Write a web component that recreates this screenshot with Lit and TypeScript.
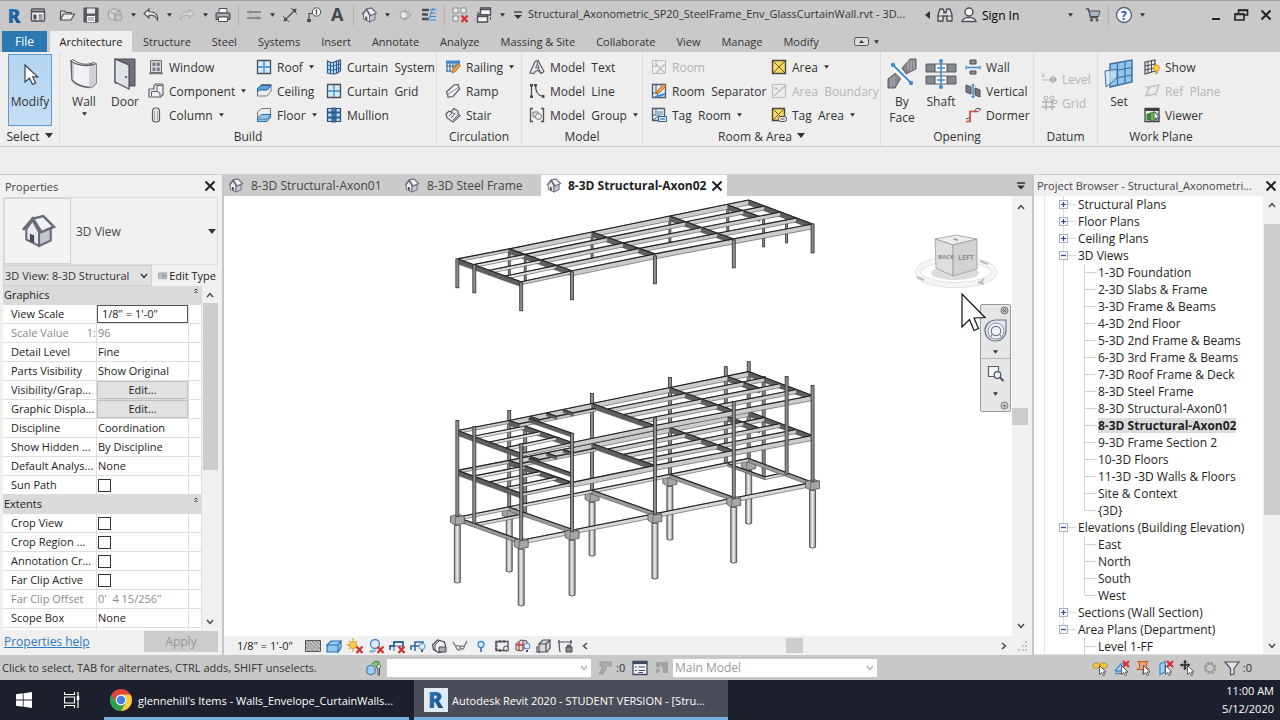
import { LitElement, html, svg, css, nothing } from "lit";
import { customElement } from "lit/decorators.js";
import { classMap } from "lit/directives/class-map.js";

/* ---------- icon artwork (16 × 16 unless noted) ---------- */

const D = "#4b4d57";
const B = "#3c8bd0";
const L = "#b9dcf5";

const cursorArrow = svg`<path d="M7.500 5.500v9l2.100-1.900 1.500 3 1.500-.7-1.500-2.900h2.900z" fill="#fff" stroke=${D} stroke-width=".9"/>`;
const redX = svg`<path d="M9.500 8.500l6 6.500M15.500 8.500l-6 6.500" stroke="#d8302f" stroke-width="2.200"/>`;
const pencil = svg`<path d="M7 14l1-3.500 5-6 2.500 2-5 6z" fill="#f2a13c" stroke="#a8591c" stroke-width=".8"/>`;

const art: Record<string, unknown> = {
  home: svg`<rect x="1.500" y="2" width="13" height="12" rx="1" fill="#f4f4f4" stroke=${D} stroke-width="1.400"/><path d="M2 4.500h12" stroke=${D} stroke-width="2"/><path d="M3.500 7.500h3v5h-3z" fill=${D}/><path d="M8.500 8h4M8.500 10h4M8.500 12h4" stroke=${D}/>`,
  open: svg`<path d="M1.500 13V4h4l1.500 1.500h5V7" fill="#d9d9d9" stroke=${D} stroke-width="1.200"/><path d="M1.500 13l3-6h11l-3.500 6z" fill="#eee" stroke=${D} stroke-width="1.200"/>`,
  save: svg`<path d="M1 1h14v14H1z" fill="#5a5c66" stroke=${D}/><path d="M4 1.500h8v5H4z" fill="#e6e6e6"/><path d="M4 9h8v6H4z" fill="#f5f5f5"/><path d="M5 11h6M5 13h6" stroke="#888"/>`,
  sync: svg`<path d="M1.500 4.500l5.500-3 6 2v7l-5.500 3-6-2.500z" fill="#d2d2d2" stroke="#9a9ca2"/><path d="M1.500 4.500l6 2.300 5.500-3.300M7.500 7v6.500" fill="none" stroke="#9a9ca2"/><circle cx="11.500" cy="10.500" r="3.500" fill="#c2c2c2" stroke="#9a9ca2"/>`,
  undo: svg`<path d="M6 2L1 6.500 6 11V8.200c4-.3 7 .8 8.500 4.800C15.500 8 12 4.600 6 4.800z" fill="#eee" stroke=${D} stroke-width="1.100"/>`,
  redo: svg`<path d="M10 2l5 4.500-5 4.500V8.200c-4-.3-7 .8-8.500 4.800C.5 8 4 4.600 10 4.800z" fill="#d6d6d6" stroke="#a5a5a8"/>`,
  print: svg`<path d="M4 1.500h8V6H4z" fill="#fff" stroke=${D}/><path d="M1 6h14v6.500H1z" fill="#888a92" stroke=${D}/><path d="M3.500 10h9v4.500h-9z" fill="#fff" stroke=${D}/><path d="M2.500 8h11" stroke="#ddd"/>`,
  measure: svg`<path d="M1 5h14M1 11h14" stroke="#888a92" stroke-width="2"/><path d="M1 8h14" stroke="#c9b9a0"/><path d="M4 3v4M12 9v4" stroke="#888a92"/>`,
  dim: svg`<path d="M3 13L13 3" stroke=${D} stroke-width="1.300"/><path d="M1.500 14.500l1-4.500L6 13.500zM14.500 1.500l-1 4.500L10 2.500z" fill=${D}/><path d="M1 9l6 6M9 1l6 6" stroke=${D} stroke-width=".9"/>`,
  tag: svg`<circle cx="10.500" cy="5" r="4.200" fill="#f4f4f4" stroke=${D}/><path d="M10.500 2.800v4.600M9.500 3.800l1-.9" stroke=${D} stroke-width="1.200" fill="none"/><path d="M6.500 6.500H3v6" fill="none" stroke=${D} stroke-width="1.200"/><path d="M1 12h4v3H1z" fill=${D}/>`,
  textA: svg`<text x="1" y="14" font-size="18" font-weight="700" fill="#44464e" font-family="Open Sans, sans-serif">A</text>`,
  house: svg`<path d="M2.500 7v5L8.500 15V8.500L5.500 3z" fill="#e9e9ef" stroke="#6a6c78"/><path d="M8.500 8.500V15l5.500-2.500V6.500z" fill="#c3c6d2" stroke="#6a6c78"/><path d="M5.500 2.200l5-1.200L15.500 6l-6 2.500z" fill="#f1f2f7" stroke="#6a6c78" stroke-width="1.200"/><path d="M1 7.500L5.500 2.200l4 6.300" fill="none" stroke="#6a6c78" stroke-width="1.300"/><path d="M4.200 9.300l2 .7v3.700l-2-1z" fill="#4a4c58"/>`,
  section: svg`<circle cx="7" cy="8" r="4" fill="#ddd" stroke="#9b9da3"/><path d="M8 3l6 5-6 5z" fill="#bfbfc2" stroke="#9b9da3"/><circle cx="7" cy="8" r="2.500" fill="#e8e8d8"/>`,
  thin: svg`<path d="M1 3h7M1 7.500h6M1 12h7" stroke=${D} stroke-width="2.500"/><path d="M9 2.500h6M9 6h6M9 9.500h6M9 13h6" stroke=${B}/><path d="M12 1L7 14" stroke=${B} stroke-width="1"/>`,
  closeHidden: svg`<path d="M1 1h5v5H1zM9 1h5v5H9zM1 9h5v5H1z" fill="#ededed" stroke="#8a8a8a"/>${redX}`,
  switchWin: svg`<path d="M4.500 1h10v7h-10z" fill="#f4f4f4" stroke=${D} stroke-width="1.400"/><path d="M1.500 8h10v7h-10z" fill="#f4f4f4" stroke=${D} stroke-width="1.400"/><path d="M1.500 9.500h10M4.500 2.500h10" stroke=${D} stroke-width="1.500"/><path d="M1 5l2 2 1.500-2M14.500 10v3" stroke=${D} fill="none"/>`,
  customise: svg`<path d="M4 5h8" stroke="#333" stroke-width="1.300"/><path d="M4 8h8l-4 4z" fill="#333"/>`,
  binoc: svg`<path d="M1 14V8l2-6h3l1 3h2l1-3h3l2 6v6h-5V9H6v5z" fill="#e3e3e6" stroke=${D} stroke-width="1.400"/><path d="M1 9h5M10 9h5M6 6h4" stroke=${D} stroke-width="1.200"/>`,
  person: svg`<circle cx="8" cy="5" r="4" fill="#f2f2f2" stroke=${D} stroke-width="1.400"/><path d="M1 14.500c.5-3 3-3.500 5-4h4c2 .5 4.500 1 5 4z" fill="#f2f2f2" stroke=${D} stroke-width="1.400"/>`,
  cart: svg`<path d="M1 2h2.500l2 8.500H13" fill="none" stroke=${D} stroke-width="1.400"/><path d="M4 4h11l-1.500 5.500h-8z" fill="#a7b4c6" stroke=${D}/><circle cx="6.500" cy="13" r="1.500" fill=${D}/><circle cx="12" cy="13" r="1.500" fill=${D}/>`,
  help: svg`<circle cx="8" cy="8" r="7.500" fill="#f6f8fc" stroke="#56617c" stroke-width="1.300"/><text x="5" y="12.500" font-size="12" font-weight="700" fill="#2a57a8" font-family="Open Sans, sans-serif">?</text>`,
  minimise: svg`<path d="M4 12h8" stroke="#222" stroke-width="2"/>`,
  restore: svg`<path d="M5.500 6V3h9v5h-3M2 7h9v6H2z" fill="none" stroke="#222" stroke-width="1.600"/><path d="M2 7.500h9M5.500 3.500h9" stroke="#222" stroke-width="1.500"/>`,
  close: svg`<path d="M3.500 3.500l9 9M12.500 3.500l-9 9" stroke="#222" stroke-width="2"/>`,
  window: svg`<path d="M2.500 1.500h11v12h-11z" fill="#d9d9dd" stroke="#6d6f78"/><path d="M4.500 3.500h3v3.500h-3zM8.800 3.500h3v3.500h-3zM4.500 8.500h3v3.500h-3zM8.800 8.500h3v3.500h-3z" fill="#777a84"/><path d="M1 14.500h14" stroke="#6d6f78" stroke-width="1.400"/>`,
  component: svg`<path d="M1 6h5V2.500L8 1h6.500l.5 1v9.500L12.500 14H1z" fill="#f0f0f2" stroke="#5b5d66" stroke-width="1.200"/><path d="M9 2v6.500H3.500V13M9 2.500h5M9 8.500l3 1.500v4" fill="none" stroke="#5b5d66"/>`,
  column: svg`<rect x="4.500" y="1" width="7" height="14" rx="3" fill="#e9e9ec" stroke="#5b5d66" stroke-width="1.200"/><path d="M6.500 4v9M9.500 4v9" stroke="#aaa"/>`,
  roof: svg`<path d="M1.500 1.500h13v13h-13z" fill="#d5e9f8" stroke=${D} stroke-width="1.300"/><path d="M8 2v12M2 8h12" stroke=${B} stroke-width="1.300"/>`,
  ceiling: svg`<path d="M1.500 6l4-4.500h9.500v7L11 13H1.500z" fill="#ededf0" stroke="#777" /><path d="M1.500 5.500l3-3H15l-3.500 4.500h-8L1.500 9z" fill="#5aa5e0" stroke="#2e5f92"/>`,
  floor: svg`<path d="M1.500 5l4-3.500h9v9l-4 3h-9z" fill="#ececef" stroke="#777"/><path d="M1.500 11l4-3.500H15L11 12H1.500zM1.500 11.500v3H11l4-4.500" fill="#8cc3ee" stroke="#2e6aa5"/>`,
  curtainSystem: svg`<path d="M1.500 2c3 2 7 2 9 0l4-1v11l-4 2.500c-3 1-6 .5-9-.5z" fill=${L} stroke="#2d5a8c" stroke-width="1.200"/><path d="M4.500 3.500v11M7.500 3.500v11M10.500 2v12M12.500 2v11M1.500 6c3 1.500 7 1.500 9 0l4-1M1.500 10c3 1.500 7 1.500 9 0l4-1" fill="none" stroke="#2d5a8c"/>`,
  mullion: svg`<path d="M1.500 1.500h13v13h-13z" fill=${L} stroke="#2d4a6c" stroke-width="1.200"/><path d="M6 1h4v14H6z" fill="#3f7fc0" stroke="#223f60" stroke-width=".8"/><path d="M1.500 5.500h13M1.500 10.500h13" stroke="#2d5a8c" stroke-width="1.800"/>`,
  railing: svg`<path d="M1 3h14" stroke=${B} stroke-width="3"/><path d="M2 4v9M5 4v9M8 4v6M11 4v3M14 4v2M1 7h13M1 12h6" stroke="#3d6b9c" stroke-width="1.200"/>${pencil}`,
  ramp: svg`<path d="M1.500 9L9 2l4-.5L14.500 6 8 13.500l-5 .5z" fill="#f1f1f3" stroke="#5b5d66" stroke-width="1.200"/><path d="M3 14V11L14 4" fill="none" stroke="#8b8d95"/>`,
  stair: svg`<path d="M1 7l3-3 2 1 3-3.500 4 2.500v3l2 1.500L8 15 2 11z" fill="#ebebee" stroke="#5b5d66" stroke-width="1.200"/><path d="M4 9l3-3M6 11l4-4.500M8 13l5-5M6 5l4 2" stroke="#5b5d66"/>`,
  modelText: svg`<path d="M1 14L6 2.500l3-1 6 11-3 2-2.500-3-3 .5L5 14.500z" fill="#f0f0f2" stroke="#5b5d66" stroke-width="1.200"/><path d="M6.500 9l2-4 1.500 4zM9 1.500L8 5M12 14.500L9 8" fill="none" stroke="#5b5d66"/>`,
  modelLine: svg`<path d="M2.500 2v12M6.500 2c0 7 2 10.500 8 11.500" fill="none" stroke=${D} stroke-width="1.300"/><path d="M1 1h3v2.500H1zM1 12.500h3V15H1zM5 1h3v2.500H5zM13 12h2.500v3H13z" fill=${D}/>`,
  modelGroup: svg`<path d="M4 1.500H1.500v13H4M12 1.500h2.500v13H12" fill="none" stroke=${D} stroke-width="1.300"/><path d="M4 5h5v5H4z" fill="#e5e5e8" stroke="#777"/><circle cx="9.500" cy="9.500" r="3" fill="#eee" stroke="#777"/>`,
  room: svg`<path d="M1.500 1.500h13v13h-13z" fill="#f0f0f0" stroke="#b9b9bc"/><path d="M5 1.500v6H1.500M5 5l9 9M14 5l-9 9" stroke="#b9b9bc" fill="none" stroke-width="1.200"/>`,
  roomSep: svg`<path d="M1.500 1.500h13v13h-13z" fill="#e8eef5" stroke="#4b5a70" stroke-width="1.300"/><path d="M5 1.500v8M1.500 10h5v4" stroke="#4b5a70" fill="none"/><path d="M4 14l10-3" stroke=${B} stroke-width="2"/><path d="M5.500 10.500l1-3L12.500 1 15 3 9 9.500z" fill="#f2a13c" stroke="#a8591c" stroke-width=".8"/>`,
  tagRoom: svg`<path d="M1.500 1.500h12v12h-12z" fill="#e8eef5" stroke="#4b5a70" stroke-width="1.300"/><path d="M5 1.500v6M1.500 8h8M2 13l6-4" stroke="#4b5a70" fill="none"/><path d="M5 4h7v4H5z" fill="#9fb6cd"/><path d="M7.500 9.500h8v5h-8z" fill="#d8ecfa" stroke="#2d5a8c"/><path d="M9 12h5" stroke="#2d5a8c"/>`,
  area: svg`<path d="M1.500 1.500h13v13h-13z" fill="#f7d765" stroke="#4d4636" stroke-width="1.400"/><path d="M2 2l12 12M14 2L2 14" stroke="#6b5a22"/>`,
  areaB: svg`<path d="M1.500 1.500h13v13h-13z" fill="#ededed" stroke="#bdbdc0" stroke-width="1.200"/><path d="M3 13L14 3M3 5l4 1" stroke="#bdbdc0" stroke-width="1.500"/>`,
  tagArea: svg`<path d="M1.500 1.500h12v12h-12z" fill="#f7d765" stroke="#4d4636" stroke-width="1.400"/><path d="M2 2l11 11M13 2L2 13" stroke="#6b5a22"/><rect x="7.500" y="9.500" width="8" height="5" rx="2" fill="#ececef" stroke=${D}/><path d="M9.500 12h4" stroke=${D}/>`,
  opWall: svg`<path d="M5 1h6v4H5zM5 12h6v3H5z" fill="#8a8c94" stroke=${D}/><path d="M1 8.500h14" stroke=${B} stroke-width="1.500"/><path d="M1 6.500v4M15 6.500v4" stroke=${B}/>`,
  opVert: svg`<path d="M1 2l5 2v7L1 9zM10 5l5 2v7l-5-2z" fill="#777a82" stroke=${D}/><path d="M8 1v14" stroke=${B} stroke-width="1.500"/><path d="M6.500 3L8 1l1.500 2M6.500 13L8 15l1.500-2" fill="none" stroke=${B}/>`,
  dormer: svg`<path d="M1 14.500h4v-10h8.500" fill="none" stroke="#c9453f" stroke-width="1.700"/><path d="M9.500 4l2-2.500h3.500V4M1 12l3-1" fill="none" stroke=${D}/>`,
  level: svg`<path d="M1 5h3M1 9h8" stroke="#b5b5b8"/><path d="M2 2v4" stroke="#b5b5b8"/><path d="M12 4l4 4.500-4 4.500-4-4.500z" fill="#a9a9ad"/><path d="M12 4v9" stroke="#e8e8e8"/>`,
  grid: svg`<path d="M5 5v10M11 5v10M1 7h13M1 12h13" stroke="#b0b0b4" stroke-width="1.300"/><circle cx="5" cy="3" r="2" fill="#eee" stroke="#b0b0b4"/><circle cx="11" cy="3" r="2" fill="#eee" stroke="#b0b0b4"/><circle cx="14" cy="7" r="1.800" fill="#eee" stroke="#b0b0b4"/>`,
  show: svg`<path d="M1 3l10-2v11L1 15z" fill="#eaeaea" stroke=${D} stroke-width="1.200"/><path d="M4 2.500v12M7.500 2v11M1 7l10-2M1 11l10-2" stroke=${D}/><circle cx="12.500" cy="9" r="3" fill="#fbd34e" stroke="#d99a21"/><path d="M11.300 12h2.500v3h-2.500z" fill="#c59a41"/>`,
  refPlane: svg`<path d="M2 13L5 4l10-2-3 9z" fill="#ebebeb" stroke="#bdbdc0" stroke-width="1.300"/><path d="M1 3l5 3M10 10l4 4" stroke="#bdbdc0"/>`,
  viewer: svg`<path d="M1 1.500h14v13H1z" fill="#e9efe9" stroke="#3e414a" stroke-width="1.300"/><path d="M1 3h14" stroke="#3e414a" stroke-width="2"/><path d="M2.500 7l4-1.500v8l-4-.5z" fill="#3f7f3c"/><path d="M6.500 6l4-1 3 2v5l-4 2-3-.500z" fill="#65bf4e" stroke="#2f6a30" stroke-width=".8"/><path d="M10 4.500v8l2-1.600 1.300 2.700 1.200-.6-1.300-2.600h2.500z" fill="#fff" stroke=${D} stroke-width=".9"/>`,
  editType: svg`<path d="M1 3h6v9H1zM8 3h6v4H8zM8 8.500h6v4H8z" fill="#e3e6ea" stroke="#7a7f88"/><path d="M1 6h6M1 9h6M11 3v9" stroke="#7a7f88"/>`,
  /* view control bar */
  detail: svg`<path d="M.5 2.500h15v11H.5z" fill="#c9c9c9" stroke="#555"/><path d="M1 5l2-2M1 8l5-5M1 11l8-8M2 13L12 3M5 13L15 3M8 13l7-7M11 13l4-4M3 3l10 10M7 3l8 8M1 5l8 8M11 3l4 4M1 9l4 4" stroke="#777" stroke-width=".6"/>`,
  vstyle: svg`<path d="M1 7l4-4h10l-3 4zM1 7h11v7H1zM12 7l3-4v7l-3 4z" fill="#8fc8f2" stroke="#2f6ca3" stroke-width="1.100"/>`,
  sun: svg`<circle cx="6" cy="7" r="3.500" fill="#fbd24e" stroke="#d69a1d"/><path d="M6 .5v2M6 11.500v2M0 7h2M2 3l1 1M2 11l1-1M10 3L9 4" stroke="#e0a020" stroke-width="1.500"/>${redX}`,
  shadow: svg`<circle cx="7" cy="6" r="4.500" fill="#d8ebf8" stroke="#4a86bf" stroke-width="1.300"/><path d="M2 12h7l-3 2.500H1z" fill="#8eb3d2"/>${redX}`,
  cropX: svg`<path d="M1 12V8h4V4h9v6" fill="none" stroke="#39699c" stroke-width="1.800"/><path d="M1 8h14M5 4v9" stroke="#39699c"/>${redX}`,
  cropV: svg`<path d="M1 12V8h4V4h9M5 4v9M1 8h9" fill="none" stroke="#39699c" stroke-width="1.600"/><circle cx="12" cy="8.500" r="3" fill="#e1f0fb" stroke=${B}/><path d="M11 12h2v2h-2z" fill=${D}/>`,
  lock3d: svg`<path d="M1.500 7l5-5 7 2 1 4v5l-7 1.500-5-3z" fill="#f2f2f4" stroke=${D} stroke-width="1.200"/><path d="M4 7v6M4 7l4-4" stroke=${D}/><path d="M8 9h7v5H8z" fill="#a9abb2" stroke=${D}/>`,
  glasses: svg`<path d="M1 4l4 7c2 2 4 1 3-2 0-1-2-2-4-1M8 9c2-2 5-1 4 1-1 2-4 1-4-1M12 9l3-6" fill="none" stroke="#6d6f78" stroke-width="1.200"/>`,
  bulb: svg`<circle cx="8" cy="6.500" r="3" fill="#d8ecfb" stroke=${B} stroke-width="1.300"/><path d="M7 10h2v4H7z" fill="#5d86ad"/>`,
  tmpView: svg`<path d="M2 3.500h12v9H2z" fill="#eee" stroke=${D} stroke-width="1.300"/><path d="M1 5h3M1 8h3M1 11h3M6 2v3M10 2v3M6 11v3" stroke=${D} stroke-width="1.200"/><circle cx="12" cy="10.500" r="2.500" fill="#ddd" stroke=${D}/>`,
  analytic: svg`<path d="M1 6l5-4 6 1v6l-6 4-5-1z" fill="#e2e2e6" stroke=${D}/><path d="M1 7h9M4 4v9M8 3v9" stroke="#c73f3a" stroke-width="1.300"/><circle cx="12" cy="8" r="3" fill="#dceefb" stroke=${B}/><path d="M11 12h2v2h-2z" fill=${D}/>`,
  displace: svg`<path d="M3 6l4-4h7v8l-3 4H3z" fill="#d8d8dc" stroke=${D} stroke-width="1.200"/><path d="M3 6h7v8M10 6l4-4M1 8v6h3" fill="none" stroke=${D} stroke-width="1.200"/>`,
  constraint: svg`<path d="M1 4h14M2 2v4M14 2v4M2 6l1 8" stroke=${D} stroke-width="1.200" fill="none"/><path d="M9 9h6v5H9zM10.500 9V7h3v2" fill="#888a92" stroke=${D}/>`,
  /* status bar */
  worksets: svg`<path d="M1 7l4-2 4 2v6l-4 2-4-2z" fill="#9cd0f2" stroke="#2f6ca3"/><path d="M6 4l3-3 4 1v5l-3 1" fill="#7dc46b" stroke="#3c7f35"/><path d="M12 5c-2 1-1 3 0 3v7h1.500V8c1.500-1 1.500-2 .5-3" fill="#e6e6ea" stroke=${D}/>`,
  requests: svg`<path d="M3 2h11v4H9v3l-3 5H2l3-5V6H3z" fill="#acacb0" stroke="#98989c"/>`,
  options: svg`<path d="M1 1.500h14v13H1z" fill="#f3f5f8" stroke="#3d4a61" stroke-width="1.300"/><path d="M1 3h14" stroke="#3d4a61" stroke-width="2.200"/><path d="M3 7h2M3 10.500h2M6.500 7H13M6.500 10.500H13M6.500 12.500H11" stroke="#3d4a61" stroke-width="1.200"/>`,
  addSet: svg`<path d="M2 2h12v11H9V8L4 13H2z" fill="#a2a2a6"/><path d="M2 8h6l-2-3M8 8l-2 3" stroke="#ddd" fill="none"/>`,
  selLinks: svg`<path d="M1 6c0-4 6-4 7-1 1-3 7-3 7 1 0 3-4 3-6 1H7C5 9 1 9 1 6z" fill="#f2c744" stroke="#b48a1c"/>${cursorArrow}`,
  selUnder: svg`<path d="M1 11l6-7h6M1 11h7M1 13.500h7" fill="#bfe0f6" stroke=${B} stroke-width="1.300"/><path d="M9 1l6 6M15 1L9 7" stroke="#d8302f" stroke-width="2.200"/>${cursorArrow}`,
  selPin: svg`<path d="M2 1.500h10L10.500 4v3l2.500 2.500H1L3.500 7V4z" fill="#f2a06a" stroke="#c2552a"/><path d="M7 9.500V15" stroke="#c2552a"/>${cursorArrow}`,
  selFace: svg`<path d="M2 4l5-2.500V12L2 14.500z" fill="#a6d4f4" stroke=${B} stroke-width="1.300"/><path d="M9 1l6 6M15 1L9 7" stroke="#d8302f" stroke-width="2.200"/>${cursorArrow}`,
  drag: svg`<path d="M5 .5v9M.5 5h9" stroke="#222" stroke-width="1.500"/><path d="M5 0L3 2.500h4zM5 10L3 7.500h4zM0 5l2.500-2v4zM10 5L7.500 3v4z" fill="#222"/>${cursorArrow}`,
  gear: svg`<circle cx="8" cy="8" r="5" fill="none" stroke="#9c9ca0" stroke-width="2.600" stroke-dasharray="2.600 1.300"/><circle cx="8" cy="8" r="4" fill="none" stroke="#9c9ca0" stroke-width="1.500"/>`,
  filter: svg`<path d="M1 2h14l-5 6.500V14L6.500 15V8.500z" fill="#e1e4e9" stroke="#4d525c" stroke-width="1.200"/>`,
};

/* 32 × 32 artwork */
const big: Record<string, unknown> = {
  modify: svg`<path d="M11 7v17l4.500-3.800 3 6.300 3.200-1.600-3-6h5z" fill="#fff" stroke="#3d4150" stroke-width="1.200"/>`,
  wall: svg`<path d="M3 3c7 5 14 6 25 3v19c-2 3-4 4-6 4.500C15 29 8 27 4 22z" fill="#f3f3f6" stroke="#5d5f68" stroke-width="1.400"/><path d="M5 5v16M22 29.500V9" fill="none" stroke="#b3b5bc" stroke-width="1.200"/><path d="M22 9l6-3v19c-2 3-4 4-6 4.500z" fill="#cfd1d8"/><path d="M3 3l2-1.500c7 5 13 6 21 3l2 1.500" fill="#fafafc" stroke="#5d5f68"/>`,
  door: svg`<path d="M6 1h20v27h-5L6 25z" fill="#6f727c" stroke="#4c4e57"/><path d="M6 1l14 6v24L6 24z" fill="#dfe2e8" stroke="#4c4e57" stroke-width="1.200"/><circle cx="17" cy="19" r="1.600" fill="#555" stroke="#fff" stroke-width=".7"/>`,
  byFace: svg`<path d="M30 1v10L20 16l-4-6 8-9zM2 30V21l9-7 4 6-6 10z" fill="#85878e" stroke="#5a5c64"/><path d="M22 3v9M25 2v11M28 2v10M5 20v9M8 18v10" stroke="#b8b9be"/><path d="M6 7l18 18" stroke="#fff" stroke-width="6"/><path d="M7 7l18 18" stroke=${B} stroke-width="1.800"/><circle cx="7" cy="7" r="2.200" fill=${B}/><circle cx="25" cy="25" r="2.200" fill=${B}/>`,
  shaft: svg`<path d="M1 6h9v8H1zM22 6h9v8h-9zM1 18h9v8H1zM22 18h9v8h-9z" fill="#85878e" stroke="#5a5c64"/><path d="M10 6h12v8H10zM10 18h12v8H10z" fill="#fafafa" stroke="#5a5c64"/><path d="M16 3v26M12 10h8M12 22h8" stroke=${B} stroke-width="1.600"/><circle cx="16" cy="3" r="2" fill=${B}/><circle cx="16" cy="29" r="2" fill=${B}/>`,
  set: svg`<path d="M7 6l22-4v22L7 29z" fill="#8fc4ee" stroke="#3d6d9d" stroke-width="1.400"/><path d="M14.500 4.500v23M22 3v22.500M7 13.500l22-4M7 21l22-4" stroke="#3d6d9d" stroke-width="1.200"/><path d="M2 13l12-2v9L3 29z" fill="#cfe6f8" fill-opacity=".7" stroke="#3d6d9d"/>`,
};

const icon = (name: string) => svg`<svg class="ic" viewBox="0 0 16 16" aria-hidden="true">${art[name]}</svg>`;
const bigIcon = (name: string) => svg`<svg class="big-ic" viewBox="0 0 32 32" aria-hidden="true">${big[name]}</svg>`;
const caret = svg`<svg class="caret" viewBox="0 0 6 4" aria-hidden="true"><path d="M0 0h6L3 4z" fill="#333"/></svg>`;
const chevron = (d: string) => svg`<svg class="chev" viewBox="0 0 8 8" aria-hidden="true"><path d=${d} fill="none" stroke="currentColor" stroke-width="1.400"/></svg>`;
const UP = "M1 6l3-3.500L7 6";
const DOWN = "M1 2l3 3.500L7 2";
const LEFT = "M6 1L2.500 4 6 7";
const RIGHT = "M2 1l3.500 3L2 7";

const revitMark = svg`<svg class="revit" viewBox="0 0 24 24" aria-hidden="true">
  <defs><linearGradient id="rg" x1="0" y1="0" x2="1" y2="1"><stop offset="0" stop-color="#2f86c9"/><stop offset="1" stop-color="#153f73"/></linearGradient></defs>
  <text x="4" y="20" font-size="22" font-weight="800" fill="url(#rg)" font-family="Open Sans, sans-serif">R</text></svg>`;

/* ---------- steel frame drawing ---------- */

type Pt = [number, number];
const mix = (a: Pt, b: Pt, t: number): Pt => [a[0] + (b[0] - a[0]) * t, a[1] + (b[1] - a[1]) * t];

const backLine: Pt[] = [[457, 430], [509, 420], [592, 403], [670, 387], [728, 376], [749, 371]];
const frontLine: Pt[] = [[521, 453], [572, 442], [655, 425], [734, 410], [792, 399], [813, 395]];
const LIGHT = "#cbcbcb";
const DARK = "#5f6064";

const girder = (a: Pt, b: Pt, h: number, fill: string) => svg`
  <polygon points="${a[0]},${a[1]} ${b[0]},${b[1]} ${b[0]},${b[1] + h} ${a[0]},${a[1] + h}" fill=${fill} stroke="#505052" stroke-width=".6"/>
  <line x1=${a[0]} y1=${a[1]} x2=${b[0]} y2=${b[1]} stroke="#202020" stroke-width="1.100"/>`;

const post = (x: number, y1: number, y2: number, w = 3) => svg`
  <rect x=${x - w / 2} y=${y1} width=${w} height=${y2 - y1} fill="#8e8e90" stroke="#2e2e30" stroke-width=".8"/>`;

const pile = (x: number, y1: number, y2: number) => svg`
  <path d="M${x - 3} ${y1}V${y2 - 1}q3 2 6 0V${y1}z" fill="url(#pile)" stroke="#3a3a3c" stroke-width=".8"/>
  <polygon points="${x - 7},${y1 - 9} ${x + 1},${y1 - 11} ${x + 7},${y1 - 9} ${x + 7},${y1 - 2} ${x - 2},${y1} ${x - 7},${y1 - 3}" fill="#a6a6a8" stroke="#4a4a4c" stroke-width=".8"/>
  <path d="M${x - 2} ${y1}v-8l9-1.500" fill="none" stroke="#4a4a4c" stroke-width=".6"/>`;

const deck = (dy: number, open: boolean) => {
  const at = (i: number, f: number): Pt => {
    const p = mix(backLine[i], frontLine[i], f);
    return [p[0], p[1] + dy];
  };
  const out: unknown[] = [];
  [0, 0.25, 0.5, 0.75, 1].forEach((f) => {
    if (f > 0) {
      [0, 1, 2, 3, 4, 5].forEach((i) => {
        if (i === 4 && f > 0.5) return;
        out.push(girder(at(i, f - 0.25), at(i, f), 5, DARK));
      });
    }
    const edge = f === 0 || f === 1;
    const depth = edge ? 5 : 4;
    out.push(girder(at(0, f), at(1, f), 3, edge ? LIGHT : "#e4e4e4"));
    if (edge || !open) out.push(girder(at(1, f), at(2, f), depth, LIGHT));
    out.push(girder(at(2, f), at(3, f), depth, LIGHT));
    out.push(girder(at(3, f), at(5, f), depth, LIGHT));
  });
  if (open) {
    out.push(girder(at(1, 0.16), mix(at(1, 0.16), at(2, 0.16), 0.92), 3, LIGHT));
    [0.25, 0.45, 0.65].forEach((t) => out.push(girder(mix(at(1, 0), at(2, 0), t), mix(at(1, 0.16), at(2, 0.16), t), 3, DARK)));
    out.push(girder(mix(at(1, 0.05), at(2, 0.05), 0.2), mix(at(1, 0.75), at(2, 0.75), 0.2), 4, DARK));
  }
  return out;
};

const base = () => {
  const at = (i: number, f: number): Pt => {
    const p = mix(backLine[i], frontLine[i], f);
    return [p[0], p[1] + 87];
  };
  const pale = "#d9d9db";
  return [
    girder(at(0, 0), at(5, 0), 3, pale),
    girder(at(0, 0.27), at(1, 0.27), 3, pale),
    girder(at(4, 0.58), at(5, 0.58), 3, pale),
    girder(at(4, 0), at(4, 0.58), 3, "#8f8f92"),
    ...[0, 1, 2, 3, 5].map((i) => girder(at(i, 0), at(i, 1), 4, "#9a9a9d")),
    girder(at(0, 1), at(5, 1), 4, pale),
  ];
};

const model = () => svg`
  <svg class="model" viewBox="224 195 788 441" role="img" aria-label="Axonometric view of the steel frame">
    <defs><linearGradient id="pile"><stop offset="0" stop-color="#8b8b8d"/><stop offset=".45" stop-color="#f0f0f0"/><stop offset="1" stop-color="#8b8b8d"/></linearGradient></defs>
    ${[[509, 248, 275], [525, 254, 280], [592, 232, 258], [670, 216, 241], [728, 205, 230], [764, 218, 246], [787, 214, 242]].map(([x, a, b]) => post(x, a, b, 2))}
    ${deck(-172, false)}
    ${[[457, 258, 287], [474, 264, 292], [521, 282, 310], [572, 271, 299], [655, 255, 283], [734, 239, 267], [813, 223, 252]].map(([x, a, b]) => post(x, a, b))}
    ${[[749, 470, 524], [670, 486, 540], [592, 502, 556], [509, 518, 572]].map(([x, a, b]) => pile(x, a, b))}
    ${[[509, 410, 508], [525, 417, 514], [592, 393, 492], [670, 377, 476], [726, 366, 465], [749, 361, 460], [764, 376, 477]].map(([x, a, b]) => post(x, a, b))}
    ${base()}
    ${deck(40, true)}
    ${deck(0, true)}
    ${post(787, 376, 474)}${post(474, 426, 523)}
    ${[[457, 525, 583], [813, 490, 548], [734, 507, 563], [655, 523, 579], [572, 540, 596], [521, 549, 606]].map(([x, a, b]) => pile(x, a, b))}
    ${[[457, 420, 516], [521, 443, 540], [572, 433, 531], [655, 417, 514], [734, 401, 498], [813, 385, 481]].map(([x, a, b]) => post(x, a, b))}
  </svg>`;

const viewCube = svg`
  <svg class="cube" viewBox="914 231 84 58" role="img" aria-label="View cube">
    <ellipse cx="956" cy="271" rx="38" ry="13" fill="none" stroke="#dcdcde" stroke-width="6"/>
    <ellipse cx="956" cy="271" rx="38" ry="13" fill="none" stroke="#f6f6f6" stroke-width="4.500"/>
    <path d="M980 260l8 3M917 276l7 3M978 281l6 2M984 278l-3 3" stroke="#bbb" stroke-width="2"/>
    <ellipse cx="955" cy="272" rx="24" ry="7" fill="#dcdcdc"/>
    <polygon points="935,238 956,234 977,238 953,244" fill="#ececec" stroke="#9a9a9c" stroke-width=".8"/>
    <polygon points="935,238 953,244 953,275 936,267" fill="#dedede" stroke="#9a9a9c" stroke-width=".8"/>
    <polygon points="953,244 977,238 977,268 953,275" fill="#d2d2d2" stroke="#9a9a9c" stroke-width=".8"/>
    <path d="M953 238l5 1M955 237l2 3" stroke="#999"/>
    <text x="958" y="259" class="face">LEFT</text>
    <text x="938" y="258" class="face small">BACK</text>
  </svg>`;

/* ---------- data ---------- */

interface Tool { icon: string; text: string; drop?: boolean; off?: boolean }
const t = (i: string, text: string, drop = false, off = false): Tool => ({ icon: i, text, drop, off });

const buildTools: Tool[][] = [
  [t("window", "Window"), t("component", "Component", true), t("column", "Column", true)],
  [t("roof", "Roof", true), t("ceiling", "Ceiling"), t("floor", "Floor", true)],
  [t("curtainSystem", "Curtain  System"), t("roof", "Curtain  Grid"), t("mullion", "Mullion")],
];
const circulation = [t("railing", "Railing", true), t("ramp", "Ramp"), t("stair", "Stair")];
const modelTools = [t("modelText", "Model  Text"), t("modelLine", "Model  Line"), t("modelGroup", "Model  Group", true)];
const roomTools: Tool[][] = [
  [t("room", "Room", false, true), t("roomSep", "Room  Separator"), t("tagRoom", "Tag  Room", true)],
  [t("area", "Area", true), t("areaB", "Area  Boundary", false, true), t("tagArea", "Tag  Area", true)],
];
const openingTools = [t("opWall", "Wall"), t("opVert", "Vertical"), t("dormer", "Dormer")];
const datumTools = [t("level", "Level", false, true), t("grid", "Grid", false, true)];
const planeTools = [t("show", "Show"), t("refPlane", "Ref  Plane", false, true), t("viewer", "Viewer")];

const ribbonTabs = ["Architecture", "Structure", "Steel", "Systems", "Insert", "Annotate", "Analyze", "Massing & Site", "Collaborate", "View", "Manage", "Modify"];

type Row = { label: string; kind: "text" | "input" | "button" | "check" | "section"; value?: string; dim?: boolean };
const rows: Row[] = [
  { label: "Graphics", kind: "section" },
  { label: "View Scale", kind: "input", value: "1/8\" = 1'-0\"" },
  { label: "Scale Value", kind: "text", value: "96", dim: true },
  { label: "Detail Level", kind: "text", value: "Fine" },
  { label: "Parts Visibility", kind: "text", value: "Show Original" },
  { label: "Visibility/Grap...", kind: "button", value: "Edit..." },
  { label: "Graphic Displa...", kind: "button", value: "Edit..." },
  { label: "Discipline", kind: "text", value: "Coordination" },
  { label: "Show Hidden ...", kind: "text", value: "By Discipline" },
  { label: "Default Analys...", kind: "text", value: "None" },
  { label: "Sun Path", kind: "check" },
  { label: "Extents", kind: "section" },
  { label: "Crop View", kind: "check" },
  { label: "Crop Region ...", kind: "check" },
  { label: "Annotation Cr...", kind: "check" },
  { label: "Far Clip Active", kind: "check" },
  { label: "Far Clip Offset", kind: "text", value: "0'  4 15/256\"", dim: true },
  { label: "Scope Box", kind: "text", value: "None" },
  { label: "", kind: "check" },
];

type Node = { text: string; open?: boolean; leaf?: boolean; last?: boolean; current?: boolean };
const leaf = (text: string, last = false, current = false): Node => ({ text, leaf: true, last, current });
const nodes: Node[] = [
  { text: "Structural Plans" }, { text: "Floor Plans" }, { text: "Ceiling Plans" },
  { text: "3D Views", open: true },
  leaf("1-3D Foundation"), leaf("2-3D Slabs & Frame"), leaf("3-3D Frame & Beams"), leaf("4-3D 2nd Floor"),
  leaf("5-3D 2nd Frame & Beams"), leaf("6-3D 3rd Frame & Beams"), leaf("7-3D Roof Frame & Deck"),
  leaf("8-3D Steel Frame"), leaf("8-3D Structural-Axon01"), leaf("8-3D Structural-Axon02", false, true),
  leaf("9-3D Frame Section 2"), leaf("10-3D Floors"), leaf("11-3D -3D Walls & Floors"),
  leaf("Site & Context"), leaf("{3D}", true),
  { text: "Elevations (Building Elevation)", open: true },
  leaf("East"), leaf("North"), leaf("South"), leaf("West", true),
  { text: "Sections (Wall Section)" },
  { text: "Area Plans (Department)", open: true },
  leaf("Level 1-FF"),
];

/* ---------- shared styles ---------- */

const shared = css`
  :host, * { box-sizing: border-box; }
  button, input, select { font: inherit; color: inherit; border: 0; background: none; padding: 0; margin: 0; border-radius: 0; }
  select { appearance: none; }
  button { display: flex; align-items: center; justify-content: center; white-space: pre; }
  ul { list-style: none; margin: 0; padding: 0; }
  svg { flex: none; }
  .ic { width: 16px; height: 16px; display: block; overflow: visible; }
  .big-ic { width: 32px; height: 32px; display: block; }
  .caret { width: 5px; height: 4px; display: block; }
  .chev { width: 8px; height: 8px; display: block; }
  .revit { overflow: visible; display: block; }
`;

/* ---------- title bar ---------- */

@customElement("title-bar")
export class TitleBar extends LitElement {
  static styles = [shared, css`
    :host { display: flex; align-items: center; height: 31px; background: #c9c9c9; padding: 0 2px 2px; font-size: 12px;
      border-top: 1px solid #a2a2a2; }
    .q { width: 24px; height: 24px; flex: none; }
    .dd { width: 12px; height: 24px; flex: none; }
    .sep { width: 7px; height: 22px; flex: none; display: flex; justify-content: center; }
    .sep::before { content: ""; width: 1px; background: #b4b4b4; }
    .gap { width: 5px; flex: none; }
    .revit { width: 21px; height: 21px; }
    .custom { width: 20px; }
    .title { font-size: 11px; line-height: 16px; font-weight: 400; margin: 0; padding-bottom: 3px; white-space: nowrap; width: 393px; flex: none; color: #333; }
    .user { gap: 5px; padding: 0 4px; }
    .mid { flex: 43; }
    .end { flex: 58; }
    .win { width: 25px; height: 24px; flex: none; }
  `];
  q(name: string, label: string) { return html`<button class="q" aria-label=${label}>${icon(name)}</button>`; }
  dd(label: string) { return html`<button class="dd" aria-label=${label}>${caret}</button>`; }
  sep() { return html`<span class="sep"></span>`; }
  render() {
    return html`
      <button class="q" aria-label="Revit">${revitMark}</button>
      ${this.q("home", "Home")}<span class="gap"></span>
      ${this.q("open", "Open")}${this.q("save", "Save")}${this.q("sync", "Synchronize")}${this.dd("Synchronize options")}
      ${this.q("undo", "Undo")}${this.dd("Undo list")}${this.q("redo", "Redo")}${this.dd("Redo list")}${this.q("print", "Print")}
      ${this.sep()}${this.q("measure", "Measure")}${this.dd("Measure options")}${this.q("dim", "Aligned dimension")}${this.q("tag", "Tag by category")}${this.q("textA", "Text")}
      ${this.sep()}${this.q("house", "Default 3D view")}${this.dd("3D view options")}${this.q("section", "Section")}${this.q("thin", "Thin lines")}
      ${this.sep()}${this.q("closeHidden", "Close inactive views")}${this.q("switchWin", "Switch windows")}${this.dd("Window list")}
      <button class="q custom" aria-label="Customize toolbar">${icon("customise")}</button>
      <h1 class="title">Structural_Axonometric_SP20_SteelFrame_Env_GlassCurtainWall.rvt - 3D...</h1>
      <button class="dd" aria-label="Search">${svg`<svg width="5" height="8" viewBox="0 0 5 8"><path d="M5 0v8L0 4z" fill="#333"/></svg>`}</button>
      ${this.q("binoc", "Find")}
      <button class="user">${icon("person")}Sign In</button>
      <span class="mid"></span>
      ${this.dd("Account options")}<span class="gap"></span>${this.q("cart", "App store")}${this.sep()}${this.q("help", "Help")}${this.dd("Help options")}
      <span class="end"></span>
      <button class="win" aria-label="Minimize">${icon("minimise")}</button>
      <button class="win" aria-label="Restore">${icon("restore")}</button>
      <button class="win" aria-label="Close">${icon("close")}</button>`;
  }
}

/* ---------- ribbon ---------- */

@customElement("ribbon-bar")
export class RibbonBar extends LitElement {
  static styles = [shared, css`
    :host { display: block; font-size: 12px; color: #333; }
    .tabs { display: flex; height: 21px; background: #c9c9c9; align-items: stretch; padding-left: 2px; font-size: 11px; }
    .tab { padding: 0 11px 0 10px; }
    .tab.file { width: 45px; background: #2c78b3; color: #fff; padding: 0; margin-right: 3px; font-size: 12px; }
    .tab.on { background: #eee; padding: 0; width: 82px; margin-right: 1px; color: #222; }
    .pill { gap: 4px; margin-left: 24px; }
    .panels { display: flex; height: 95px; background: #eee; border-bottom: 1px solid #cfcfcf; }
    .panel { display: flex; flex-direction: column; border-right: 1px solid #dcdcdc; flex: none; }
    .panel.last { border: 0; }
    .body { flex: 1; display: flex; padding-top: 3px; }
    .name { height: 18px; margin: 0 0 1px; font-weight: 400; font-size: 12px; display: flex; align-items: center; justify-content: center; gap: 5px; }
    .col { display: flex; flex-direction: column; }
    .tool { height: 24px; gap: 5px; justify-content: flex-start; }
    .tool .caret { margin-left: 1px; }
    .off { color: #b4b4b4; }
    .large { flex-direction: column; justify-content: flex-start; padding-top: 3px; line-height: 16px; }
    .large .lab { margin-top: 4px; white-space: pre-line; }
    .large .caret { margin-top: 2px; }
    .select { width: 60px; }
    .select .body { padding: 2px 7px 0 8px; }
    .modify { width: 45px; height: 72px; border: 1px solid #5b9bd5; background: linear-gradient(#b4d4f1, #c5def4); padding-top: 3px; }
    .build { width: 377px; }
    .build .body { display: grid; grid-template-columns: 44px 38px 112px 70px 1fr; padding-left: 2px; }
    .build .large + .col, .opening .large + .col { margin-left: 4px; }
    .circ { width: 85px; } .circ .body { padding-left: 8px; }
    .mod { width: 121px; } .mod .body { padding-left: 7px; }
    .room { width: 238px; } .room .body { display: grid; grid-template-columns: 120px 1fr; padding-left: 8px; }
    .opening { width: 153px; } .opening .body { display: grid; grid-template-columns: 38px 40px 1fr; padding-left: 2px; }
    .datum { width: 64px; } .datum .body { padding: 15px 0 0 7px; }
    .plane { width: 126px; } .plane .body { display: grid; grid-template-columns: 42px 1fr; }
    .plane .col { margin-left: 4px; }
    .options { height: 28px; background: #eee; border-bottom: 1px solid #d0d0d0; }
    .bigcaret { width: 8px; height: 6px; }
  `];
  tool(x: Tool) {
    return html`<button class=${classMap({ tool: true, off: !!x.off })} ?disabled=${x.off}>${icon(x.icon)}<span>${x.text}</span>${x.drop ? caret : nothing}</button>`;
  }
  col(list: Tool[]) { return html`<div class="col">${list.map((x) => this.tool(x))}</div>`; }
  large(name: string, text: string, drop = false) {
    return html`<button class="large">${bigIcon(name)}<span class="lab">${text}</span>${drop ? caret : nothing}</button>`;
  }
  bigCaret() { return svg`<svg class="bigcaret" viewBox="0 0 8 6"><path d="M0 0h8L4 5z" fill="#333"/></svg>`; }
  panel(cls: string, name: string, body: unknown, drop = false) {
    return html`<section class="panel ${cls}"><div class="body">${body}</div><h2 class="name">${name}${drop ? this.bigCaret() : nothing}</h2></section>`;
  }
  render() {
    return html`
      <nav class="tabs">
        <button class="tab file">File</button>
        ${ribbonTabs.map((n, i) => html`<button class=${classMap({ tab: true, on: i === 0 })}>${n}</button>`)}
        <button class="pill" aria-label="Minimize ribbon">${svg`<svg width="16" height="10" viewBox="0 0 16 10"><rect x=".5" y=".5" width="14" height="8" rx="2" fill="#ddd" stroke="#555"/><path d="M5 6h5L7.500 3z" fill="#333"/></svg>`}${caret}</button>
      </nav>
      <div class="panels">
        ${this.panel("select", "Select", html`<button class="large modify">${bigIcon("modify")}<span class="lab">Modify</span></button>`, true)}
        ${this.panel("build", "Build", html`${this.large("wall", "Wall", true)}${this.large("door", "Door")}${buildTools.map((c) => this.col(c))}`)}
        ${this.panel("circ", "Circulation", this.col(circulation))}
        ${this.panel("mod", "Model", this.col(modelTools))}
        ${this.panel("room", "Room & Area", roomTools.map((c) => this.col(c)), true)}
        ${this.panel("opening", "Opening", html`${this.large("byFace", "By\nFace")}${this.large("shaft", "Shaft")}${this.col(openingTools)}`)}
        ${this.panel("datum", "Datum", this.col(datumTools))}
        ${this.panel("plane last", "Work Plane", html`${this.large("set", "Set")}${this.col(planeTools)}`)}
      </div>
      <div class="options"></div>`;
  }
}

/* ---------- properties palette ---------- */

@customElement("properties-panel")
export class PropertiesPanel extends LitElement {
  static styles = [shared, css`
    :host { display: flex; flex-direction: column; background: #f0f0f0; font-size: 12px; color: #222; padding: 0 4px 0 3px; border-right: 2px solid #c6c6c6; min-height: 0; }
    .head { display: flex; justify-content: space-between; align-items: center; height: 22px; padding: 0 0 0 2px; color: #444; flex: none; font-size: 11px; }
    .head h2 { font: inherit; margin: 0; }
    .type { display: flex; height: 68px; border: 1px solid #dcdcdc; align-items: center; flex: none; padding-right: 1px; }
    .thumb { width: 67px; height: 66px; border: 1px solid #d2d2d2; display: flex; align-items: center; justify-content: center; background: #f3f3f3; }
    .thumb svg { width: 34px; height: 34px; }
    .type select { flex: 1; padding-left: 5px; color: #444; height: 30px; }
    .inst { display: flex; height: 21px; align-items: stretch; flex: none; }
    .pick { display: flex; width: 149px; background: #e1e1e1; border: 1px solid #d0d0d0; align-items: center; gap: 4px; font-size: 11px; color: #333; }
    .pick select { width: 132px; padding-left: 1px; text-overflow: clip; }
    .edit { flex: 1; gap: 1px; padding-right: 2px; justify-content: flex-end; font-size: 11px; }
    .edit .ic { width: 10px; height: 10px; }
    .sheet { display: flex; flex: 1; min-height: 0; overflow: hidden; }
    .clip { flex: 1; overflow: hidden; font-size: 11px; }
    table { width: 100%; border-collapse: separate; border-spacing: 0; table-layout: fixed; background: #fff; }
    .c1 { width: 94px; } .c3 { width: 13px; }
    th, td { padding: 0; height: 19px; line-height: 18px; font-weight: 400; text-align: left; vertical-align: middle; border: 0 solid #dedede; border-width: 0 1px 1px 0; white-space: pre; }
    th { padding-left: 8px; }
    .ratio { float: right; }
    td { padding-left: 1px; }
    .section th { background: #dadada; padding-left: 1px; border-color: #dadada; }
    .fold { float: right; margin: 2px 3px 0 0; }
    .dim { color: #8a8a8a; }
    .txt { width: 100%; height: 18px; border: 1px solid #555; padding-left: 4px; display: block; background: #fff; }
    .btn { width: 100%; height: 18px; background: #e1e1e1; border: 1px solid #c0c0c0; }
    .box { appearance: none; width: 13px; height: 13px; border: 1px solid #333; background: #fff; display: block; }
    td.flush { padding-left: 0; }
    .scroll { width: 16px; display: flex; flex-direction: column; align-items: center; background: #f0f0f0; flex: none; color: #444; }
    .arrow { height: 17px; width: 16px; }
    .thumbbar { width: 15px; height: 167px; background: #cdcdcd; }
    .grow { flex: 1; }
    .foot { height: 25px; display: flex; justify-content: space-between; align-items: center; padding: 0 0 3px 1px; flex: none; }
    .foot a { color: #2a7ac4; }
    .apply { width: 74px; height: 21px; background: #cccccc; color: #959595; }
  `];
  cell(r: Row, i: number) {
    const id = `p${i}`;
    switch (r.kind) {
      case "input": return html`<td class="flush"><input id=${id} class="txt" .value=${r.value ?? ""}></td>`;
      case "button": return html`<td class="flush"><button id=${id} class="btn">${r.value}</button></td>`;
      case "check": return html`<td><input id=${id} class="box" type="checkbox" aria-label=${r.label || "Section Box"}></td>`;
      default: return html`<td class=${classMap({ dim: !!r.dim })}>${r.value}</td>`;
    }
  }
  row(r: Row, i: number) {
    if (r.kind === "section") return html`<tr class="section"><th colspan="3">${r.label}${svg`<svg class="fold" width="4" height="6" viewBox="0 0 4 6" aria-hidden="true"><path d="M.5 2.500L2 1l1.500 1.500M.5 5L2 3.500 3.500 5" fill="none" stroke="#333"/></svg>`}</th></tr>`;
    const linked = r.kind === "input" || r.kind === "button" || r.kind === "check";
    const name = linked ? html`<label for=${`p${i}`}>${r.label}</label>` : html`<span>${r.label}</span>`;
    return html`<tr><th class=${classMap({ dim: !!r.dim })} scope="row">${name}${r.label === "Scale Value" ? html`<span class="ratio">1:</span>` : nothing}</th>${this.cell(r, i)}<td></td></tr>`;
  }
  render() {
    return html`
      <header class="head"><h2>Properties</h2><button aria-label="Close properties">${icon("close")}</button></header>
      <div class="type">
        <span class="thumb">${icon("house")}</span>
        <select aria-label="Family type"><option>3D View</option></select>${this.caretBig()}
      </div>
      <div class="inst">
        <span class="pick"><select aria-label="Instance"><option>3D View: 8-3D Structural</option></select>${chevron(DOWN)}</span>
        <button class="edit">${icon("editType")}Edit Type</button>
      </div>
      <div class="sheet">
        <div class="clip"><table><colgroup><col class="c1"><col><col class="c3"></colgroup><tbody>${rows.map((r, i) => this.row(r, i))}</tbody></table></div>
        <div class="scroll"><button class="arrow" aria-label="Scroll up">${chevron(UP)}</button><span class="thumbbar"></span><span class="grow"></span><button class="arrow" aria-label="Scroll down">${chevron(DOWN)}</button></div>
      </div>
      <footer class="foot"><a href="#help">Properties help</a><button class="apply" disabled>Apply</button></footer>`;
  }
  caretBig() { return svg`<svg width="8" height="5" viewBox="0 0 8 5"><path d="M0 0h8L4 5z" fill="#333"/></svg>`; }
}

/* ---------- drawing area ---------- */

@customElement("view-area")
export class ViewArea extends LitElement {
  static styles = [shared, css`
    :host { display: flex; flex-direction: column; min-width: 0; min-height: 0; background: #fff; font-size: 12px; color: #333; border-right: 2px solid #c6c6c6; }
    .tabs { display: flex; height: 21px; background: #cbcbcb; flex: none; align-items: stretch; padding: 0 7px 0 0; }
    .tab { gap: 8px; justify-content: flex-start; padding-left: 4px; color: #444; width: 176px; }
    .tab.second { width: 141px; }
    .tab .ic { width: 15px; height: 15px; }
    .on { background: #fff; display: flex; align-items: center; gap: 3px; padding-right: 2px; }
    .on .tab { width: auto; font-weight: 700; color: #222; gap: 7px; padding-left: 5px; }
    .grow { flex: 1; }
    .stage { flex: 1; display: flex; min-height: 0; }
    .view { flex: 1; position: relative; min-width: 0; overflow: hidden; }
    .model { width: 100%; height: 100%; display: block; }
    .cube { position: absolute; right: 14px; top: 36px; width: 84px; height: 58px; }
    .face { font: 700 7px "Open Sans", sans-serif; fill: #8b8b8d; }
    .small { font-size: 6px; }
    .nav { position: absolute; right: 1px; top: 108px; width: 31px; height: 108px; background: #e6e6e6; border: 1px solid #9b9b9b; border-radius: 2px; display: flex; flex-direction: column; align-items: center; }
    .nav .tiny { align-self: flex-end; width: 12px; height: 11px; }
    .nav .tool { width: 29px; height: 30px; }
    .nav .drop { height: 12px; width: 29px; }
    .nav hr { width: 29px; border: 0; border-top: 1px solid #b5b5b5; margin: 0; }
    .pointer { position: absolute; right: 25px; top: 97px; width: 26px; height: 40px; }
    .vscroll { width: 20px; background: #f1f1f1; display: flex; flex-direction: column; align-items: flex-start; flex: none; color: #444; }
    .arrow { width: 17px; height: 21px; }
    .vthumb { width: 16px; height: 17px; background: #cdcdcd; }
    .above { flex: 194; } .below { flex: 192; }
    .bar { display: flex; height: 19px; background: #f0f0f0; align-items: center; flex: none; padding-left: 13px; color: #444; }
    .scale { font-size: 11px; width: 65px; justify-content: flex-start; color: #222; }
    .ctl { width: 21px; height: 18px; flex: none; }
    .harrow { width: 20px; height: 18px; flex: none; }
    .track { flex: 1; display: flex; align-items: stretch; height: 15px; }
    .hthumb { width: 17px; background: #cdcdcd; }
    .left { flex: 191; } .right { flex: 191; }
    .grip { width: 18px; display: flex; justify-content: center; }
  `];
  render() {
    const ctl = ["detail", "vstyle", "sun", "shadow", "cropX", "cropV", "lock3d", "glasses", "bulb", "tmpView", "analytic", "displace", "constraint"];
    const names = ["Detail level", "Visual style", "Sun path", "Shadows", "Crop view", "Crop region", "Locked view", "Hide or isolate", "Reveal hidden", "Temporary view", "Analytical model", "Displacement", "Constraints"];
    return html`
      <div class="tabs">
        <button class="tab">${icon("house")}8-3D Structural-Axon01</button>
        <button class="tab second">${icon("house")}8-3D Steel Frame</button>
        <span class="on"><button class="tab">${icon("house")}8-3D Structural-Axon02</button><button aria-label="Close view">${icon("close")}</button></span>
        <span class="grow"></span>
        <button aria-label="View list">${svg`<svg width="8" height="8" viewBox="0 0 8 8"><path d="M0 1h8" stroke="#333" stroke-width="1.500"/><path d="M0 3.500h8L4 7.500z" fill="#333"/></svg>`}</button>
      </div>
      <div class="stage">
        <div class="view">
          ${model()}${viewCube}
          <div class="nav">
            <button class="tiny" aria-label="Close navigation bar">${svg`<svg width="9" height="9" viewBox="0 0 9 9"><circle cx="4.500" cy="4.500" r="3.500" fill="#bbb" stroke="#777"/><path d="M3 3l3 3M6 3L3 6" stroke="#666"/></svg>`}</button>
            <button class="tool" aria-label="Steering wheel">${svg`<svg width="24" height="24" viewBox="0 0 24 24"><path d="M12 1h10v11A10.500 10.500 0 1 1 12 1z" fill="#dfe6f2" stroke="#6b7486" stroke-width="1.200"/><circle cx="12" cy="12" r="8" fill="#f4f4f6" stroke="#8a93a5"/><circle cx="12" cy="12" r="4.700" fill="#eef1f6" stroke="#6b7486" stroke-width="1.200"/><path d="M6.500 18l2-3M17.500 18l-2-3" stroke="#6b7486"/></svg>`}</button>
            <button class="drop" aria-label="Wheel options">${caret}</button>
            <hr>
            <button class="tool" aria-label="Zoom region">${svg`<svg width="17" height="17" viewBox="0 0 17 17"><path d="M9 11.500H1.500v-10h10V6" fill="#f4f4f4" stroke="#5b5d66" stroke-width="1.200"/><circle cx="10.500" cy="10" r="3.300" fill="#eef4fa" stroke="#4b5568" stroke-width="1.300"/><path d="M13 12.500l3.500 3.500" stroke="#4b5568" stroke-width="2"/></svg>`}</button>
            <button class="drop" aria-label="Zoom options">${caret}</button>
            <button class="tiny" aria-label="Navigation bar options">${svg`<svg width="9" height="9" viewBox="0 0 9 9"><circle cx="4.500" cy="4.500" r="3.500" fill="#ccc" stroke="#777"/><path d="M2.500 4h4l-2 2.500z" fill="#777"/></svg>`}</button>
          </div>
          ${svg`<svg class="pointer" viewBox="0 0 26 40" aria-hidden="true"><path d="M1 1v33l7.500-7.500 4.500 11 4.500-2-4.500-10.500 11-.500z" fill="#fff" stroke="#111" stroke-width="1.200"/></svg>`}
        </div>
        <div class="vscroll"><button class="arrow" aria-label="Scroll up">${chevron(UP)}</button><span class="above"></span><span class="vthumb"></span><span class="below"></span><button class="arrow" aria-label="Scroll down">${chevron(DOWN)}</button></div>
      </div>
      <div class="bar">
        <button class="scale">1/8" = 1'-0"</button>
        ${ctl.map((c, i) => html`<button class="ctl" aria-label=${names[i]}>${icon(c)}</button>`)}
        <button class="harrow" aria-label="Scroll left">${chevron(LEFT)}</button>
        <div class="track"><span class="left"></span><span class="hthumb"></span><span class="right"></span></div>
        <button class="harrow" aria-label="Scroll right">${chevron(RIGHT)}</button>
        <span class="grip">${svg`<svg width="12" height="12" viewBox="0 0 12 12"><path d="M8 1h2v2H8zM5 5h2v2H5zM8 5h2v2H8zM1 9h2v2H1zM5 9h2v2H5zM8 9h2v2H8z" fill="#c2c2c2"/></svg>`}</span>
      </div>`;
  }
}

/* ---------- project browser ---------- */

@customElement("project-browser")
export class ProjectBrowser extends LitElement {
  static styles = [shared, css`
    :host { display: flex; flex-direction: column; background: #fff; font-size: 12px; color: #222; min-height: 0; overflow: hidden; border-bottom: 1px solid #e2e2e2; }
    .head { display: flex; justify-content: space-between; align-items: center; height: 21px; background: #f0f0f0; padding: 0 1px 0 3px; color: #444; flex: none; }
    .head h2 { font: inherit; font-size: 11px; margin: 0; white-space: nowrap; }
    .body { display: flex; flex: 1; min-height: 0; }
    .tree { flex: 1; overflow: hidden; }
    .row { display: flex; height: 17px; align-items: center; white-space: nowrap; }
    .row button { height: 17px; }
    .lines { display: block; flex: none; height: 17px; }
    .row .now { font-weight: 700; background: #dcdcdc; height: 15px; }
    .scroll { width: 17px; background: #f0f0f0; display: flex; flex-direction: column; align-items: center; flex: none; color: #444; }
    .arrow { width: 17px; height: 28px; align-items: flex-start; padding-top: 5px; }
    .arrow.down { height: 16px; padding: 0; align-items: center; }
    .thumb { width: 16px; height: 291px; background: #cdcdcd; }
    .grow { flex: 1; }
  `];
  lines(n: Node, i: number) {
    const w = n.leaf ? 64 : 44;
    const trunk = i < 25 ? svg`<path d="M29.500 0v17" stroke="#dadada"/>` : svg`<path d="M29.500 0v8" stroke="#dadada"/>`;
    return svg`<svg class="lines" width=${w} height="17" viewBox="0 0 ${w} 17" aria-hidden="true">
      <path d="M10.500 0v17" stroke="#e4e4e4"/>${n.leaf && i > 25 ? nothing : trunk}
      ${n.leaf
        ? svg`<path d="M50.500 0v${n.last ? 8 : 17}M50.500 8.500h12" fill="none" stroke="#d0d0d0"/>`
        : svg`<path d="M34 8.500h8" stroke="#d8d8d8"/><rect x="25.500" y="4.500" width="8" height="8" fill="#f8f9fc" stroke="#a9b0c4"/><path d=${n.open ? "M27 8.500h5" : "M27 8.500h5M29.500 6v5"} stroke="#34468c" stroke-width="1.200"/>`}
    </svg>`;
  }
  render() {
    return html`
      <header class="head"><h2>Project Browser - Structural_Axonometri...</h2><button aria-label="Close browser">${icon("close")}</button></header>
      <div class="body">
        <ul class="tree">${nodes.map((n, i) => html`<li class="row">${this.lines(n, i)}<button class=${classMap({ now: !!n.current })}>${n.text}</button></li>`)}</ul>
        <div class="scroll"><button class="arrow" aria-label="Scroll up">${chevron(UP)}</button><span class="thumb"></span><span class="grow"></span><button class="arrow down" aria-label="Scroll down">${chevron(DOWN)}</button></div>
      </div>`;
  }
}

/* ---------- status bar and taskbar ---------- */

@customElement("status-bar")
export class StatusBar extends LitElement {
  static styles = [shared, css`
    :host { display: flex; align-items: center; height: 25px; background: #c8c8c8; font-size: 11px; color: #333; padding: 0 28px 0 2px; }
    .msg { margin: 0; width: 361px; white-space: nowrap; }
    .s { width: 22px; height: 22px; flex: none; }
    .field { display: flex; align-items: center; width: 204px; height: 18px; background: #fff; padding-right: 3px; margin-right: 3px; color: #b0b0b0; }
    .field select { flex: 1; height: 18px; padding-left: 2px; color: #9a9a9a; font-size: 12px; }
    .count { width: 11px; }
    .gap { width: 2px; flex: none; }
    .grow { flex: 1; }
  `];
  render() {
    const sel = [["selLinks", "Select links"], ["selUnder", "Select underlay elements"], ["selPin", "Select pinned elements"], ["selFace", "Select elements by face"], ["drag", "Drag elements on selection"], ["gear", "Background processes"], ["filter", "Filter"]];
    return html`
      <p class="msg">Click to select, TAB for alternates, CTRL adds, SHIFT unselects.</p>
      <button class="s" aria-label="Worksets">${icon("worksets")}</button><span class="gap"></span>
      <span class="field"><select aria-label="Active workset"><option></option></select>${chevron(DOWN)}</span>
      <button class="s" aria-label="Editing requests">${icon("requests")}</button><span class="count">:0</span><span class="gap"></span>
      <button class="s" aria-label="Design options">${icon("options")}</button>
      <button class="s" aria-label="Add to set">${icon("addSet")}</button>
      <span class="field"><select aria-label="Active design option"><option>Main Model</option></select>${chevron(DOWN)}</span>
      <span class="grow"></span>
      ${sel.map(([n, l]) => html`<button class="s" aria-label=${l}>${icon(n)}</button>`)}<span>:0</span>`;
  }
}

@customElement("task-bar")
export class TaskBar extends LitElement {
  static styles = [shared, css`
    :host { display: flex; height: 40px; background: #1b202c; color: #fff; font-size: 11px; align-items: stretch; }
    .sys { width: 48px; }
    .app { gap: 6px; justify-content: flex-start; border-bottom: 3px solid #76b0e0; padding: 3px 6px 0; }
    .gap { width: 8px; }
    .chrome { width: 305px; margin-right: 5px; }
    .rvt { width: 314px; background: #4a4d58; padding-left: 10px; gap: 4px; }
    .badge { width: 24px; height: 24px; background: #dfe9f7; display: flex; }
    .revit { width: 24px; height: 24px; }
    .grow { flex: 1; }
    .clock { text-align: right; line-height: 18px; padding: 2px 6px 0 0; }
  `];
  render() {
    return html`
      <button class="sys" aria-label="Start">${svg`<svg width="16" height="16" viewBox="0 0 16 16"><path d="M0 2.300l6.800-1v6.300H0zM7.600 1.200L16 0v7.600H7.600zM0 8.400h6.800v6.300L0 13.700zM7.600 8.400H16V16l-8.400-1.200z" fill="#fff"/></svg>`}</button>
      <button class="sys" aria-label="Task view">${svg`<svg width="16" height="16" viewBox="0 0 16 16"><path d="M.5 0v2.500h10V0M.5 16v-2.500h10V16M.5 5h10v6H.5z" fill="none" stroke="#fff" stroke-width="1.200"/><path d="M14 0v16" stroke="#fff" stroke-width="1.200"/><path d="M12.700 4h2.600v4h-2.600z" fill="#fff"/></svg>`}</button>
      <span class="gap"></span>
      <button class="app chrome">${svg`<svg width="22" height="22" viewBox="0 0 22 22"><circle cx="11" cy="11" r="11" fill="#e0433a"/><path d="M1.470 5.500A11 11 0 0 0 11 22l4.800-8.200H6.200z" fill="#2fa04f"/><path d="M20.500 5.500H11L15.800 13.800 11 22A11 11 0 0 0 20.500 5.500z" fill="#f9cc3f"/><circle cx="11" cy="11" r="5.400" fill="#fff"/><circle cx="11" cy="11" r="4.200" fill="#3f7fe6"/></svg>`}<span>glennehill's Items - Walls_Envelope_CurtainWalls...</span></button>
      <button class="app rvt"><span class="badge">${revitMark}</span><span>Autodesk Revit 2020 - STUDENT VERSION - [Stru...</span></button>
      <span class="grow"></span>
      <div class="clock">11:00 AM<br>5/12/2020</div>`;
  }
}

@customElement("app-root")
export class AppRoot extends LitElement {
  static styles = css`
    :host { display: flex; flex-direction: column; height: 100vh; overflow: hidden; font-family: "Open Sans", "Noto Sans", sans-serif; background: #eee; }
    .main { flex: 1; min-height: 0; display: grid; grid-template-columns: 224px minmax(0, 1fr) 246px; }
  `;
  render() {
    return html`
      <title-bar></title-bar>
      <ribbon-bar></ribbon-bar>
      <main class="main">
        <properties-panel></properties-panel>
        <view-area></view-area>
        <project-browser></project-browser>
      </main>
      <status-bar></status-bar>
      <task-bar></task-bar>`;
  }
}
